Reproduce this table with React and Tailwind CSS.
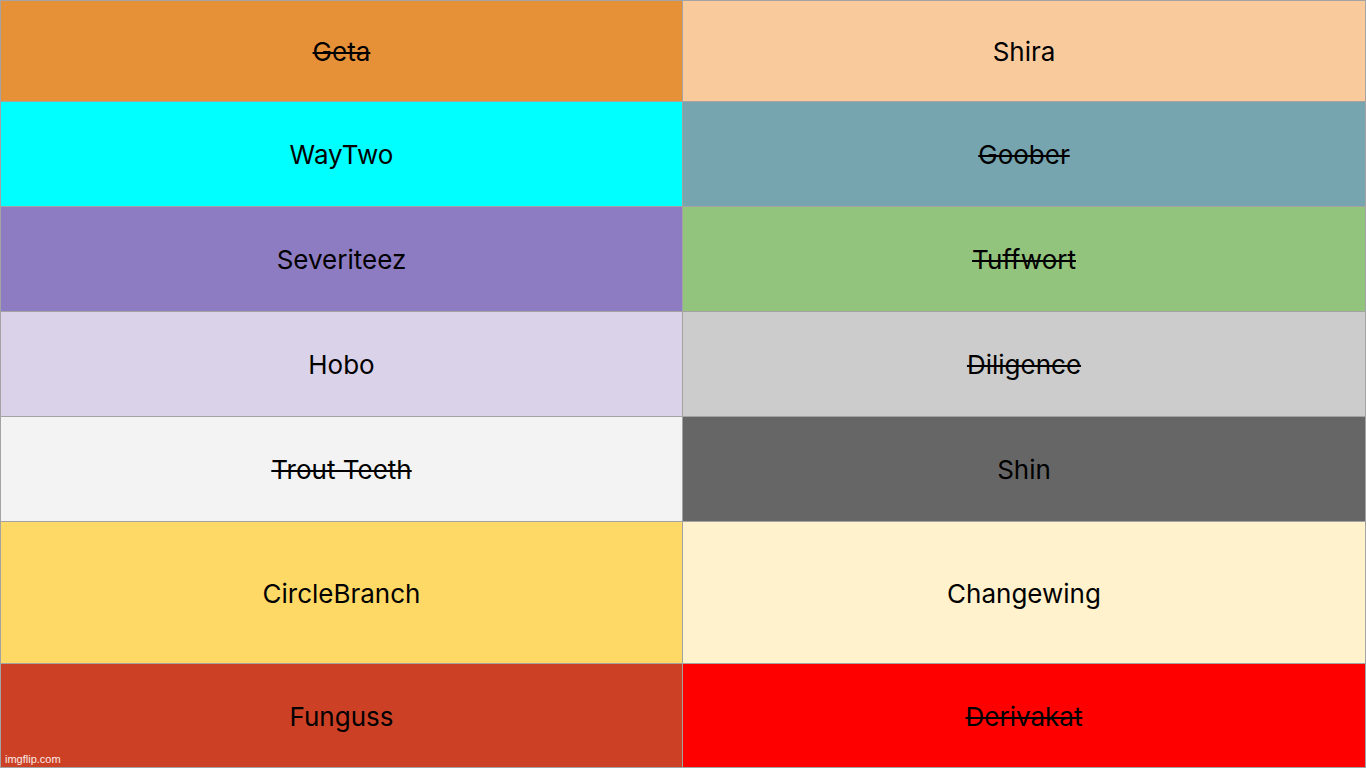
const cells = [
  { name: 'Geta', bg: 'bg-[#e69138]', struck: true },
  { name: 'Shira', bg: 'bg-[#f9cb9c]', struck: false },
  { name: 'WayTwo', bg: 'bg-[#00ffff]', struck: false },
  { name: 'Goober', bg: 'bg-[#76a5af]', struck: true },
  { name: 'Severiteez', bg: 'bg-[#8e7cc3]', struck: false },
  { name: 'Tuffwort', bg: 'bg-[#93c47d]', struck: true },
  { name: 'Hobo', bg: 'bg-[#d9d2e9]', struck: false },
  { name: 'Diligence', bg: 'bg-[#cccccc]', struck: true },
  { name: 'Trout Teeth', bg: 'bg-[#f3f3f3]', struck: true },
  { name: 'Shin', bg: 'bg-[#666666]', struck: false },
  { name: 'CircleBranch', bg: 'bg-[#ffd966]', struck: false },
  { name: 'Changewing', bg: 'bg-[#fff2cc]', struck: false },
  { name: 'Funguss', bg: 'bg-[#cc4125]', struck: false },
  { name: 'Derivakat', bg: 'bg-[#ff0000]', struck: true }
];

const App = () => {
  return (
    <div className="relative w-[1366px] h-[768px] overflow-hidden bg-[#a3a3a3]">
      {/* Table */}
      <div className="grid grid-cols-[681px_682px] grid-rows-[100px_104px_104px_104px_104px_141px_103px] gap-px p-px w-full h-full">
        {cells.map((cell) => (
          <div
            key={cell.name}
            className={`${cell.bg} flex items-center justify-center pt-[2px]`}
          >
            <span
              className={`text-[26px] leading-none text-black ${cell.struck ? 'line-through decoration-[2px]' : ''}`}
              style={{ fontFamily: 'Inter, "Open Sans", sans-serif' }}
            >
              {cell.name}
            </span>
          </div>
        ))}
      </div>

      {/* Watermark */}
      <span className="absolute left-[5px] bottom-[3px] text-[11px] leading-none text-white/90 font-['Liberation_Sans',sans-serif]">
        imgflip.com
      </span>
    </div>
  );
};

export default App;
